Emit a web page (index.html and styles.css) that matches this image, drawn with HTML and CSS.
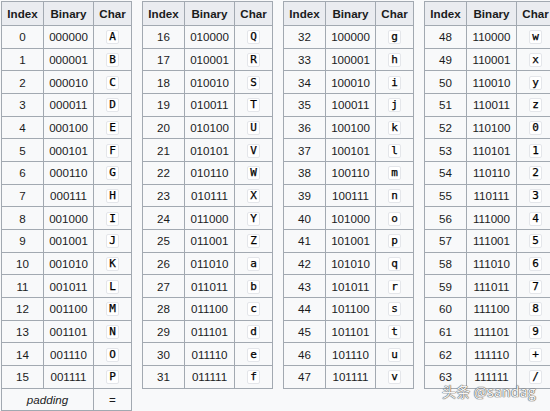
FILE: index.html
```html
<!DOCTYPE html>
<html>
<head>
<meta charset="utf-8">
<link rel="stylesheet" href="styles.css">
</head>
<body>
<div class="page">
  <div class="groups">
    <table class="b64">
      <colgroup><col class="c-idx"><col class="c-bin"><col class="c-chr"></colgroup>
      <thead><tr><th>Index</th><th>Binary</th><th>Char</th></tr></thead>
      <tbody>
        <tr><td>0</td><td>000000</td><td><code>A</code></td></tr>
        <tr><td>1</td><td>000001</td><td><code>B</code></td></tr>
        <tr><td>2</td><td>000010</td><td><code>C</code></td></tr>
        <tr><td>3</td><td>000011</td><td><code>D</code></td></tr>
        <tr><td>4</td><td>000100</td><td><code>E</code></td></tr>
        <tr><td>5</td><td>000101</td><td><code>F</code></td></tr>
        <tr><td>6</td><td>000110</td><td><code>G</code></td></tr>
        <tr><td>7</td><td>000111</td><td><code>H</code></td></tr>
        <tr><td>8</td><td>001000</td><td><code>I</code></td></tr>
        <tr><td>9</td><td>001001</td><td><code>J</code></td></tr>
        <tr><td>10</td><td>001010</td><td><code>K</code></td></tr>
        <tr><td>11</td><td>001011</td><td><code>L</code></td></tr>
        <tr><td>12</td><td>001100</td><td><code>M</code></td></tr>
        <tr><td>13</td><td>001101</td><td><code>N</code></td></tr>
        <tr><td>14</td><td>001110</td><td><code>O</code></td></tr>
        <tr><td>15</td><td>001111</td><td><code>P</code></td></tr>
      </tbody>
      <tfoot><tr class="pad-row"><td colspan="2"><i>padding</i></td><td>=</td></tr></tfoot>
    </table>
    <table class="b64">
      <colgroup><col class="c-idx"><col class="c-bin"><col class="c-chr"></colgroup>
      <thead><tr><th>Index</th><th>Binary</th><th>Char</th></tr></thead>
      <tbody>
        <tr><td>16</td><td>010000</td><td><code>Q</code></td></tr>
        <tr><td>17</td><td>010001</td><td><code>R</code></td></tr>
        <tr><td>18</td><td>010010</td><td><code>S</code></td></tr>
        <tr><td>19</td><td>010011</td><td><code>T</code></td></tr>
        <tr><td>20</td><td>010100</td><td><code>U</code></td></tr>
        <tr><td>21</td><td>010101</td><td><code>V</code></td></tr>
        <tr><td>22</td><td>010110</td><td><code>W</code></td></tr>
        <tr><td>23</td><td>010111</td><td><code>X</code></td></tr>
        <tr><td>24</td><td>011000</td><td><code>Y</code></td></tr>
        <tr><td>25</td><td>011001</td><td><code>Z</code></td></tr>
        <tr><td>26</td><td>011010</td><td><code>a</code></td></tr>
        <tr><td>27</td><td>011011</td><td><code>b</code></td></tr>
        <tr><td>28</td><td>011100</td><td><code>c</code></td></tr>
        <tr><td>29</td><td>011101</td><td><code>d</code></td></tr>
        <tr><td>30</td><td>011110</td><td><code>e</code></td></tr>
        <tr><td>31</td><td>011111</td><td><code>f</code></td></tr>
      </tbody>
    </table>
    <table class="b64">
      <colgroup><col class="c-idx"><col class="c-bin"><col class="c-chr"></colgroup>
      <thead><tr><th>Index</th><th>Binary</th><th>Char</th></tr></thead>
      <tbody>
        <tr><td>32</td><td>100000</td><td><code>g</code></td></tr>
        <tr><td>33</td><td>100001</td><td><code>h</code></td></tr>
        <tr><td>34</td><td>100010</td><td><code>i</code></td></tr>
        <tr><td>35</td><td>100011</td><td><code>j</code></td></tr>
        <tr><td>36</td><td>100100</td><td><code>k</code></td></tr>
        <tr><td>37</td><td>100101</td><td><code>l</code></td></tr>
        <tr><td>38</td><td>100110</td><td><code>m</code></td></tr>
        <tr><td>39</td><td>100111</td><td><code>n</code></td></tr>
        <tr><td>40</td><td>101000</td><td><code>o</code></td></tr>
        <tr><td>41</td><td>101001</td><td><code>p</code></td></tr>
        <tr><td>42</td><td>101010</td><td><code>q</code></td></tr>
        <tr><td>43</td><td>101011</td><td><code>r</code></td></tr>
        <tr><td>44</td><td>101100</td><td><code>s</code></td></tr>
        <tr><td>45</td><td>101101</td><td><code>t</code></td></tr>
        <tr><td>46</td><td>101110</td><td><code>u</code></td></tr>
        <tr><td>47</td><td>101111</td><td><code>v</code></td></tr>
      </tbody>
    </table>
    <table class="b64">
      <colgroup><col class="c-idx"><col class="c-bin"><col class="c-chr"></colgroup>
      <thead><tr><th>Index</th><th>Binary</th><th>Char</th></tr></thead>
      <tbody>
        <tr><td>48</td><td>110000</td><td><code>w</code></td></tr>
        <tr><td>49</td><td>110001</td><td><code>x</code></td></tr>
        <tr><td>50</td><td>110010</td><td><code>y</code></td></tr>
        <tr><td>51</td><td>110011</td><td><code>z</code></td></tr>
        <tr><td>52</td><td>110100</td><td><code>0</code></td></tr>
        <tr><td>53</td><td>110101</td><td><code>1</code></td></tr>
        <tr><td>54</td><td>110110</td><td><code>2</code></td></tr>
        <tr><td>55</td><td>110111</td><td><code>3</code></td></tr>
        <tr><td>56</td><td>111000</td><td><code>4</code></td></tr>
        <tr><td>57</td><td>111001</td><td><code>5</code></td></tr>
        <tr><td>58</td><td>111010</td><td><code>6</code></td></tr>
        <tr><td>59</td><td>111011</td><td><code>7</code></td></tr>
        <tr><td>60</td><td>111100</td><td><code>8</code></td></tr>
        <tr><td>61</td><td>111101</td><td><code>9</code></td></tr>
        <tr><td>62</td><td>111110</td><td><code>+</code></td></tr>
        <tr><td>63</td><td>111111</td><td><code>/</code></td></tr>
      </tbody>
    </table>
  </div>
  <div class="watermark">头条 @sandag</div>
</div>
</body>
</html>
```

FILE: styles.css
```css
html, body {
  margin: 0;
  padding: 0;
  background: #f8f9fa;
}
.page {
  position: relative;
  width: 550px;
  height: 411px;
  overflow: hidden;
  padding: 1px 0 0 1px;
  box-sizing: border-box;
}
.groups {
  display: flex;
  gap: 10px;
  align-items: flex-start;
}
.b64 {
  border-collapse: collapse;
  table-layout: fixed;
  width: 130px;
  font-family: "Liberation Sans", Arial, sans-serif;
  font-size: 11.6px;
  color: #1a1b1c;
  background: #f8f9fa;
}
.c-idx { width: 42px; }
.c-bin { width: 50px; }
.c-chr { width: 38px; }
.b64 th,
.b64 td {
  border: 1px solid #a2a9b1;
  padding: 0;
  text-align: center;
  vertical-align: middle;
}
.b64 th {
  background: #eaecf0;
  font-weight: bold;
}
.b64 thead tr { height: 24px; }
.b64 tbody tr { height: 22.66px; }
.b64 .pad-row { height: 22px; }
.b64 code {
  display: inline-block;
  font-family: "DejaVu Sans Mono", monospace;
  font-size: 11px;
  font-weight: normal;
  line-height: 12px;
  padding: 0 2px;
  min-width: 7px;
  background: #ffffff;
  border: 1px solid #e4e6ea;
  border-radius: 2px;
  color: #000;
  -webkit-text-stroke: 0.25px #000;
}
.watermark {
  position: absolute;
  left: 442px;
  top: 384px;
  font-family: "Noto Sans CJK SC", "Liberation Sans", sans-serif;
  font-size: 14px;
  line-height: 14px;
  letter-spacing: 0.2px;
  color: #f4f4f4;
  text-shadow: 0 0 1px #555, 0 0 1px #555, 0 0 1px #777;
  white-space: nowrap;
}
```
